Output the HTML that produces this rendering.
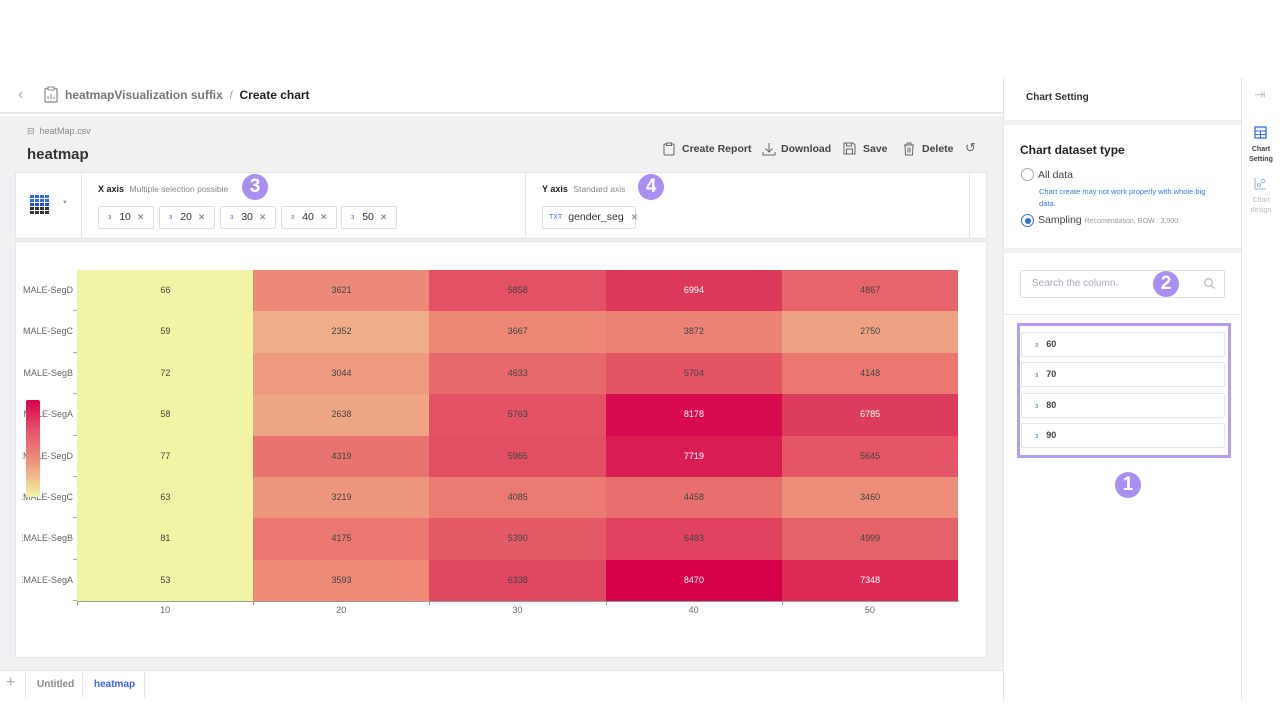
<!DOCTYPE html>
<html><head><meta charset="utf-8"><style>
*{box-sizing:border-box;margin:0;padding:0}
body{width:1280px;height:720px;position:relative;background:#fff;font-family:"Liberation Sans",sans-serif;overflow:hidden;color:#222}
.a{position:absolute}
.chip{position:absolute;top:206px;height:23px;border:1px solid #dcdfe4;border-radius:2px;background:#fff;font-size:10.5px;color:#333;line-height:21px;padding-left:9px;white-space:nowrap}
.chip i{font-style:normal;color:#3c6de0;font-size:7px;margin-right:8px;vertical-align:1px}
.chip b{font-weight:normal;color:#777;margin-left:6px;font-size:9px}
.cell{position:absolute;font-size:9px;text-align:center;color:#444}
.yl{position:absolute;right:0;font-size:9px;color:#666;text-align:right;white-space:nowrap}
.col{position:absolute;left:1021px;width:204px;height:25px;border:1px solid #e3e5e8;border-radius:2px;font-size:9px;font-weight:bold;color:#444;line-height:23px;padding-left:13px}
.col i{font-style:normal;color:#3c6de0;font-size:7px;margin-right:8px;font-weight:normal}
.badge{position:absolute;width:26px;height:26px;border-radius:50%;background:#a98ff2;color:#fff;font-weight:bold;font-size:19px;text-align:center;line-height:26px}
.tb{position:absolute;top:143px;font-size:10.5px;font-weight:bold;color:#444;white-space:nowrap}
</style></head><body>
<!-- header -->
<div class="a" style="left:0;top:78px;width:1003px;height:36px;background:#fff;border-bottom:2px solid #e6e8eb"></div>
<div class="a" style="left:18px;top:86px;font-size:16px;color:#aaa">‹</div>
<svg class="a" style="left:44px;top:86px" width="14" height="17" viewBox="0 0 14 17"><rect x="1" y="2.5" width="12" height="13.5" rx="1" fill="none" stroke="#888" stroke-width="1.2"/><rect x="4" y="1" width="6" height="3" fill="#fff" stroke="#888"/><path d="M4 13v-3M7 13v-5M10 13v-2" stroke="#888"/></svg>
<div class="a" style="left:65px;top:88px;font-size:12px;font-weight:bold;color:#777">heatmapVisualization suffix <span style="color:#999;font-weight:normal">&nbsp;/&nbsp;</span> <span style="color:#222">Create chart</span></div>
<!-- gray body -->
<div class="a" style="left:0;top:116px;width:1003px;height:554px;background:#f0f1f3"></div>
<div class="a" style="left:27px;top:126px;font-size:9px;color:#888">&#8863;&nbsp; heatMap.csv</div>
<div class="a" style="left:27px;top:146px;font-size:15px;font-weight:bold;color:#333">heatmap</div>
<svg class="a" style="left:663px;top:142px" width="12" height="14"><rect x="1" y="2" width="10" height="11" rx="1" fill="none" stroke="#666"/><rect x="3.5" y="1" width="5" height="2.5" fill="#f0f1f3" stroke="#666"/></svg>
<div class="tb" style="left:682px">Create Report</div>
<svg class="a" style="left:762px;top:142px" width="14" height="14"><path d="M7 1v9M3.5 6.5L7 10l3.5-3.5M1 10v3h12v-3" fill="none" stroke="#666"/></svg>
<div class="tb" style="left:781px">Download</div>
<svg class="a" style="left:843px;top:142px" width="13" height="13"><path d="M1 1h9l2 2v9H1z" fill="none" stroke="#666"/><rect x="3.5" y="7" width="6" height="5" fill="none" stroke="#666"/><path d="M3.5 1v3h5V1" fill="none" stroke="#666"/></svg>
<div class="tb" style="left:863px">Save</div>
<svg class="a" style="left:903px;top:142px" width="12" height="14"><path d="M1 3h10M4 3V1h4v2M2 3l.5 10h7L10 3M5 5.5v5M7 5.5v5" fill="none" stroke="#666"/></svg>
<div class="tb" style="left:922px">Delete</div>
<div class="a" style="left:965px;top:140px;font-size:13px;color:#666">↺</div>
<!-- axis panel -->
<div class="a" style="left:15px;top:172px;width:972px;height:67px;background:#fff;border:1px solid #e3e5e8"></div>
<div class="a" style="left:81px;top:172px;width:1px;height:67px;background:#e3e5e8"></div>
<div class="a" style="left:525px;top:172px;width:1px;height:67px;background:#e3e5e8"></div>
<div class="a" style="left:969px;top:172px;width:1px;height:67px;background:#e3e5e8"></div>
<svg class="a" style="left:30px;top:195px" width="21" height="20"><g fill="#2f6bf0"><rect x="0" y="0" width="4" height="3"/><rect x="5" y="0" width="4" height="3"/><rect x="10" y="0" width="4" height="3"/><rect x="15" y="0" width="4" height="3"/><rect x="0" y="4" width="4" height="3"/><rect x="5" y="4" width="4" height="3"/><rect x="10" y="4" width="4" height="3"/><rect x="15" y="4" width="4" height="3"/><rect x="0" y="8" width="4" height="3" fill="#1f4fd0"/><rect x="5" y="8" width="4" height="3" fill="#1f4fd0"/><rect x="10" y="8" width="4" height="3" fill="#1f4fd0"/><rect x="15" y="8" width="4" height="3" fill="#1f4fd0"/></g><g fill="#333"><rect x="0" y="12" width="4" height="3"/><rect x="5" y="12" width="4" height="3"/><rect x="10" y="12" width="4" height="3"/><rect x="15" y="12" width="4" height="3"/><rect x="0" y="16" width="4" height="3"/><rect x="5" y="16" width="4" height="3"/><rect x="10" y="16" width="4" height="3"/><rect x="15" y="16" width="4" height="3"/></g></svg>
<div class="a" style="left:62px;top:200px;font-size:6px;color:#999">▼</div>
<div class="a" style="left:98px;top:184px;font-size:9px;font-weight:bold;color:#222">X axis <span style="font-weight:normal;color:#888;margin-left:3px;font-size:8.5px">Multiple selection possible</span></div>
<div class="badge" style="left:242px;top:174px">3</div>
<div class="chip" style="left:98px;width:56px"><i>з</i>10<b>✕</b></div>
<div class="chip" style="left:159px;width:56px"><i>з</i>20<b>✕</b></div>
<div class="chip" style="left:220px;width:56px"><i>з</i>30<b>✕</b></div>
<div class="chip" style="left:281px;width:56px"><i>з</i>40<b>✕</b></div>
<div class="chip" style="left:341px;width:56px"><i>з</i>50<b>✕</b></div>
<div class="a" style="left:542px;top:184px;font-size:9px;font-weight:bold;color:#222">Y axis <span style="font-weight:normal;color:#888;margin-left:3px;font-size:8.5px">Standard axis</span></div>
<div class="badge" style="left:638px;top:174px">4</div>
<div class="chip" style="left:542px;width:94px;padding-left:6px"><i style="margin-right:6px">TXT</i>gender_seg<b style="margin-left:7px">✕</b></div>
<!-- chart card -->
<div class="a" style="left:15px;top:241px;width:972px;height:417px;background:#fff;border:1px solid #e3e5e8"></div>
<div class="a" id="yl" style="left:22px;top:270px;width:51px;height:340px;overflow:hidden"></div>
<div id="hm"></div>
<div class="a" style="left:77px;top:601px;width:882px;height:1px;background:#999"></div>
<div class="a" style="left:26px;top:400px;width:14px;height:97px;border-radius:2px;background:linear-gradient(#d7004c,#e4506a 30%,#ec8a78 60%,#f1f4a4)"></div>
<!-- tabs -->
<div class="a" style="left:0;top:670px;width:1003px;height:30px;background:#fff;border-top:1px solid #e3e5e8"></div>
<div class="a" style="left:6px;top:674px;font-size:16px;color:#aaa">+</div>
<div class="a" style="left:25px;top:671px;width:1px;height:27px;background:#e6e8eb"></div>
<div class="a" style="left:37px;top:679px;font-size:10px;font-weight:bold;color:#888">Untitled</div>
<div class="a" style="left:82px;top:671px;width:1px;height:27px;background:#e6e8eb"></div>
<div class="a" style="left:94px;top:679px;font-size:10px;font-weight:bold;color:#3d63f0">heatmap</div>
<div class="a" style="left:144px;top:671px;width:1px;height:27px;background:#e6e8eb"></div>
<!-- right panel -->
<div class="a" style="left:1003px;top:78px;width:1px;height:622px;background:#e3e5e8"></div>
<div class="a" style="left:1241px;top:78px;width:1px;height:622px;background:#e3e5e8"></div>
<div class="a" style="left:1026px;top:92px;font-size:10px;font-weight:bold;color:#333">Chart Setting</div>
<div class="a" style="left:1004px;top:120px;width:237px;height:5px;background:#f0f1f3"></div>
<div class="a" style="left:1020px;top:143px;font-size:12px;font-weight:bold;color:#222">Chart dataset type</div>
<div class="a" style="left:1021px;top:168px;width:13px;height:13px;border:1px solid #aaa;border-radius:50%"></div>
<div class="a" style="left:1038px;top:169px;font-size:10.5px;color:#444">All data</div>
<div class="a" style="left:1039px;top:186px;width:180px;font-size:7.5px;line-height:12px;color:#2f7cf0">Chart create may not work properly with whole big data.</div>
<div class="a" style="left:1021px;top:214px;width:13px;height:13px;border:1px solid #2f6bf0;border-radius:50%"><div style="margin:2.5px;width:6px;height:6px;border-radius:50%;background:#2f6bf0"></div></div>
<div class="a" style="left:1038px;top:214px;font-size:10.5px;color:#444;white-space:nowrap">Sampling <span style="font-size:7px;color:#999">Recomendation, ROW : 3,000</span></div>
<div class="a" style="left:1004px;top:248px;width:237px;height:5px;background:#f0f1f3"></div>
<div class="a" style="left:1020px;top:270px;width:205px;height:28px;border:1px solid #dcdfe4;border-radius:2px;font-size:10px;color:#aab;line-height:26px;padding-left:11px">Search the column.</div>
<svg class="a" style="left:1204px;top:278px" width="11" height="11"><circle cx="4.5" cy="4.5" r="3.7" fill="none" stroke="#aaa"/><path d="M7.5 7.5l3 3" stroke="#aaa"/></svg>
<div class="badge" style="left:1153px;top:271px">2</div>
<div class="a" style="left:1004px;top:314px;width:237px;height:1px;background:#e6e8eb"></div>
<div class="a" style="left:1017px;top:323px;width:214px;height:135px;border:3px solid #b49cf3"></div>
<div class="col" style="top:332px"><i>з</i>60</div>
<div class="col" style="top:362px"><i>з</i>70</div>
<div class="col" style="top:393px"><i>з</i>80</div>
<div class="col" style="top:423px"><i>з</i>90</div>
<div class="badge" style="left:1115px;top:472px">1</div>
<div class="a" style="left:1254px;top:86px;font-size:14px;color:#ccc">⇥</div>
<svg class="a" style="left:1254px;top:126px" width="13" height="13"><rect x="1" y="1" width="11" height="11" fill="none" stroke="#2f6bf0" stroke-width="1.3"/><path d="M1 5h11M1 8.5h11M6.5 5v7" stroke="#2f6bf0"/></svg>
<div class="a" style="left:1244px;top:145px;width:34px;text-align:center;font-size:7px;font-weight:bold;color:#444;line-height:10px">Chart Setting</div>
<svg class="a" style="left:1254px;top:177px" width="13" height="13"><path d="M1 1v11h11" fill="none" stroke="#9ab6f0"/><circle cx="5" cy="8" r="1.5" fill="none" stroke="#9ab6f0"/><circle cx="9" cy="4" r="1.8" fill="none" stroke="#9ab6f0"/></svg>
<div class="a" style="left:1244px;top:196px;width:34px;text-align:center;font-size:7px;color:#bbb;line-height:10px">Chart design</div>
<script>
var d=[["MALE-SegD",66,3621,5858,6994,4867],["MALE-SegC",59,2352,3667,3872,2750],["MALE-SegB",72,3044,4633,5704,4148],["MALE-SegA",58,2638,5763,8178,6785],["FEMALE-SegD",77,4319,5965,7719,5645],["FEMALE-SegC",63,3219,4085,4458,3460],["FEMALE-SegB",81,4175,5390,6483,4999],["FEMALE-SegA",53,3593,6338,8470,7348]];
var st=[[0,[241,244,164]],[1500,[241,244,164]],[2350,[240,174,136]],[3600,[237,138,120]],[4600,[232,106,108]],[6000,[226,78,99]],[7000,[220,56,90]],[8470,[214,0,74]]];
function col(v){for(var i=1;i<st.length;i++){if(v<=st[i][0]){var a=st[i-1],b=st[i],t=(v-a[0])/(b[0]-a[0]);return"rgb("+a[1].map(function(c,k){return Math.round(c+(b[1][k]-c)*t)}).join(",")+")";}}}
var h="",y2="",cw=176.2,rh=41.4;
d.forEach(function(r,ri){var y=270+ri*rh;
y2+='<div class="yl" style="top:'+(ri*rh+15)+'px">'+r[0]+'</div>';
h+='<div class="a" style="left:73px;top:'+(y+rh-1)+'px;width:4px;height:1px;background:#aaa"></div>';
for(var c=0;c<5;c++){var v=r[c+1];h+='<div class="cell" style="left:'+(77+c*cw)+'px;top:'+y+'px;width:'+(cw+0.5)+'px;height:'+(rh+0.5)+'px;line-height:'+rh+'px;background:'+col(v)+';color:'+(v>6700?'#fff':'#444')+'">'+v+'</div>';}});
[10,20,30,40,50].forEach(function(x,i){h+='<div class="a" style="left:'+(77+i*cw)+'px;top:601px;width:1px;height:4px;background:#999"></div><div class="a" style="left:'+(77+i*cw)+'px;top:605px;width:'+cw+'px;text-align:center;font-size:9px;color:#666">'+x+'</div>';});
document.getElementById("hm").innerHTML=h;
document.getElementById("yl").innerHTML=y2;
</script>
</body></html>
